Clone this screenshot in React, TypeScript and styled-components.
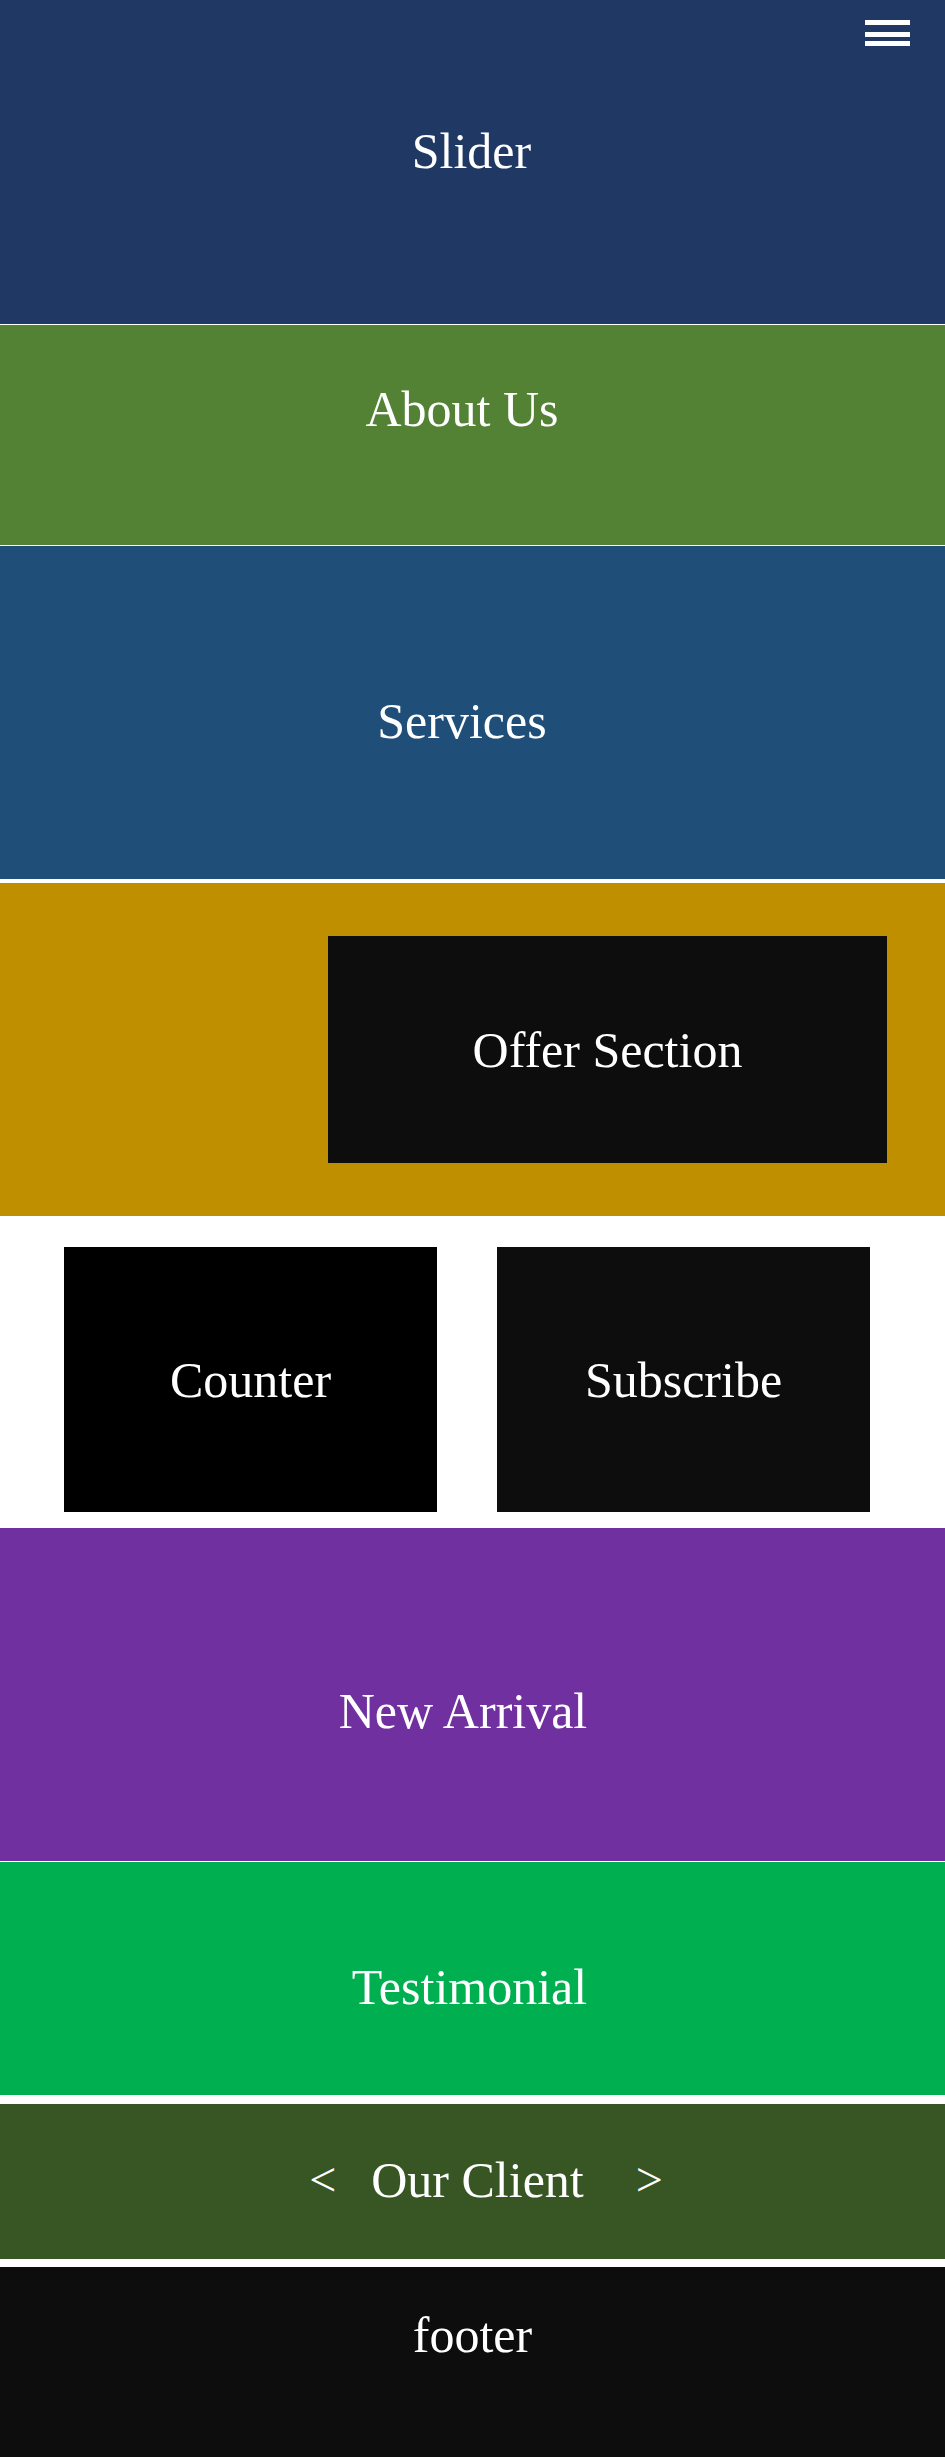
import React from "react";
import styled, { createGlobalStyle } from "styled-components";

const Global = createGlobalStyle`
  html, body { margin: 0; padding: 0; background: #ffffff; }
  body { font-family: "Liberation Serif", "Times New Roman", serif; }
  * { box-sizing: border-box; }
`;

const Page = styled.main`
  width: 945px;
  display: flex;
  flex-direction: column;
  background: #ffffff;
`;

const Band = styled.section<{
  $bg: string;
  $h: number;
  $dy?: number;
  $dx?: number;
  $gap?: number;
}>`
  position: relative;
  display: flex;
  align-items: center;
  justify-content: center;
  height: ${(p) => p.$h}px;
  margin-bottom: ${(p) => p.$gap ?? 0}px;
  background: ${(p) => p.$bg};
  padding-top: ${(p) => Math.max(0, (p.$dy ?? 0) * 2)}px;
  padding-bottom: ${(p) => Math.max(0, -(p.$dy ?? 0) * 2)}px;
  padding-left: ${(p) => Math.max(0, (p.$dx ?? 0) * 2)}px;
  padding-right: ${(p) => Math.max(0, -(p.$dx ?? 0) * 2)}px;
`;

const Title = styled.h2`
  margin: 0;
  font-family: "Liberation Serif", "Times New Roman", serif;
  font-weight: 400;
  font-size: 50px;
  line-height: 1;
  color: #ffffff;
  white-space: nowrap;
`;

const Burger = styled.button`
  position: absolute;
  top: 20px;
  right: 35px;
  width: 45px;
  height: 26px;
  padding: 0;
  border: 0;
  background: transparent;
  display: block;
  cursor: pointer;
`;

const OfferBand = styled.section`
  display: flex;
  align-items: center;
  justify-content: flex-end;
  height: 333px;
  padding-right: 58px;
  background: #bf8f00;
`;

const OfferCard = styled.div`
  display: flex;
  align-items: center;
  justify-content: center;
  width: 559px;
  height: 227px;
  background: #0d0d0d;
`;

const DuoBand = styled.section`
  display: grid;
  grid-template-columns: 373px 373px;
  column-gap: 60px;
  align-content: start;
  height: 312px;
  padding: 31px 0 0 64px;
  background: #ffffff;
`;

const DuoCard = styled.div<{ $bg: string }>`
  display: flex;
  align-items: center;
  justify-content: center;
  height: 265px;
  background: ${(p) => p.$bg};
`;

const ClientRow = styled.div`
  display: flex;
  align-items: center;
  padding-left: 27px;
  padding-bottom: 3px;
`;

const Arrow = styled.button<{ $side: "l" | "r" }>`
  padding: 0;
  border: 0;
  background: transparent;
  color: #ffffff;
  font-family: "Liberation Serif", "Times New Roman", serif;
  font-size: 48px;
  line-height: 1;
  cursor: pointer;
  margin-right: ${(p) => (p.$side === "l" ? 35 : 0)}px;
  margin-left: ${(p) => (p.$side === "r" ? 52 : 0)}px;
`;

const FooterBand = styled.footer`
  display: flex;
  justify-content: center;
  height: 190px;
  padding-top: 43px;
  background: #0d0d0d;
`;

const BurgerIcon = () => (
  <svg width="45" height="26" viewBox="0 0 45 26" aria-hidden="true">
    <rect x="0" y="0" width="45" height="5" fill="#ffffff" />
    <rect x="0" y="12" width="45" height="5" fill="#ffffff" />
    <rect x="0" y="21" width="45" height="5" fill="#ffffff" />
  </svg>
);

export default function App() {
  return (
    <>
      <Global />
      <Page>
        <Band $bg="#203864" $h={324} $dy={-11.5} $dx={-1} $gap={1}>
          <Title>Slider</Title>
          <Burger aria-label="menu">
            <BurgerIcon />
          </Burger>
        </Band>
        <Band $bg="#548235" $h={220} $dy={-26} $dx={-10.5} $gap={1}>
          <Title>About Us</Title>
        </Band>
        <Band $bg="#1f4e79" $h={333} $dy={8.5} $dx={-10.5} $gap={4}>
          <Title>Services</Title>
        </Band>
        <OfferBand>
          <OfferCard>
            <Title>Offer Section</Title>
          </OfferCard>
        </OfferBand>
        <DuoBand>
          <DuoCard $bg="#000000">
            <Title>Counter</Title>
          </DuoCard>
          <DuoCard $bg="#0d0d0d">
            <Title>Subscribe</Title>
          </DuoCard>
        </DuoBand>
        <Band $bg="#7030a0" $h={333} $dy={16.5} $dx={-9.5} $gap={1}>
          <Title>New Arrival</Title>
        </Band>
        <Band $bg="#00b050" $h={233} $dy={8.5} $dx={-3} $gap={9}>
          <Title>Testimonial</Title>
        </Band>
        <Band $bg="#375623" $h={155} $gap={8}>
          <ClientRow>
            <Arrow $side="l" aria-label="previous">&lt;</Arrow>
            <Title>Our Client</Title>
            <Arrow $side="r" aria-label="next">&gt;</Arrow>
          </ClientRow>
        </Band>
        <FooterBand>
          <Title>footer</Title>
        </FooterBand>
      </Page>
    </>
  );
}
